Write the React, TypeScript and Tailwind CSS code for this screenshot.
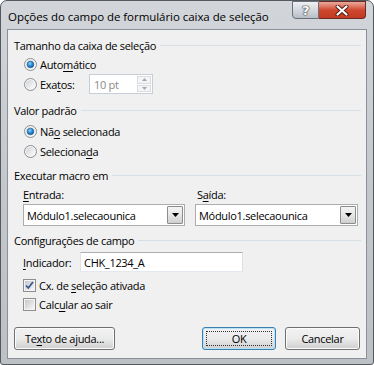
import React from "react";

function Radio({ checked, id }: { checked?: boolean; id: string }) {
  return (
    <svg width="13" height="13" viewBox="0 0 13 13" className="shrink-0">
      <defs>
        <linearGradient id={`rg-${id}`} x1="0" y1="0" x2="1" y2="1">
          <stop offset="0" stopColor="#cfd1d4" />
          <stop offset="1" stopColor="#ffffff" />
        </linearGradient>
        <radialGradient id={`rd-${id}`} cx="0.4" cy="0.35" r="0.7">
          <stop offset="0" stopColor="#8fd3fb" />
          <stop offset="0.5" stopColor="#2a8fd6" />
          <stop offset="1" stopColor="#0f4f8f" />
        </radialGradient>
      </defs>
      <circle cx="6.5" cy="6.5" r="6" fill="#f4f4f4" stroke="#8c8f93" strokeWidth="1" />
      <circle cx="6.5" cy="6.5" r="4.6" fill={`url(#rg-${id})`} />
      {checked && <circle cx="6.5" cy="6.5" r="3.3" fill={`url(#rd-${id})`} stroke="#1c5a93" strokeWidth="0.6" />}
    </svg>
  );
}

function Check({ checked, id }: { checked?: boolean; id: string }) {
  return (
    <svg width="13" height="13" viewBox="0 0 13 13" className="shrink-0">
      <defs>
        <linearGradient id={`cg-${id}`} x1="0" y1="0" x2="1" y2="1">
          <stop offset="0" stopColor="#c5c8cc" />
          <stop offset="1" stopColor="#f7f7f7" />
        </linearGradient>
      </defs>
      <rect x="0.5" y="0.5" width="12" height="12" fill="#f4f4f4" stroke="#8e8f8f" />
      <rect x="2" y="2" width="9" height="9" fill={`url(#cg-${id})`} />
      {checked && (
        <path d="M3 6.5 L5.3 9 L10 3" fill="none" stroke="#3a5a8f" strokeWidth="1.8" strokeLinejoin="round" />
      )}
    </svg>
  );
}

function U({ children }: { children: React.ReactNode }) {
  return <span className="underline underline-offset-[2px] decoration-[1px]">{children}</span>;
}

function Group({ title }: { title: string }) {
  return (
    <div className="flex items-center h-[20px] pl-[6px] pr-[5px]">
      <span className="text-black whitespace-nowrap">{title}</span>
      <div className="ml-[4px] flex-1 h-px bg-[#d5dfe5] mt-[1px]" />
    </div>
  );
}

function Combo({ value }: { value: string }) {
  return (
    <div className="h-[22px] border border-[#abadb3] bg-white flex items-center pl-[3px] pr-[1px]">
      <span className="flex-1 whitespace-nowrap">{value}</span>
      <div className="w-[16px] h-[18px] border border-[#8d8d8d] bg-gradient-to-b from-[#f4f4f4] via-[#e6e6e6] to-[#cfcfcf] flex items-center justify-center rounded-[1px]">
        <svg width="7" height="4" viewBox="0 0 7 4">
          <path d="M0 0 L7 0 L3.5 4 Z" fill="#000" />
        </svg>
      </div>
    </div>
  );
}

function Button({ children, def, w }: { children: React.ReactNode; def?: boolean; w: string }) {
  return (
    <div
      className={`${w} h-[23px] rounded-[3px] border ${
        def ? "border-[#3c7fb1] shadow-[inset_0_0_0_1px_#b8e2f8]" : "border-[#707070] shadow-[inset_0_0_0_1px_#fcfcfc]"
      } bg-gradient-to-b from-[#f2f2f2] via-[#ebebeb] to-[#cfcfcf] flex items-center justify-center relative`}
    >
      {def && <div className="absolute inset-[3px] border border-dotted border-[#333]" />}
      <span className="relative">{children}</span>
    </div>
  );
}

export default function App() {
  return (
    <div className="w-[374px] h-[365px] overflow-hidden font-['Open_Sans','Noto_Sans',sans-serif] text-[11px] tracking-[-0.3px] leading-none text-black">
      <div className="w-[374px] h-[365px] rounded-t-[7px] rounded-b-[3px] border border-[#54595e] bg-gradient-to-b from-[#d2d5d9] via-[#c4c8cc] to-[#bdc1c6] flex flex-col">
        {/* title bar */}
        <div className="h-[28px] flex items-start shrink-0">
          <div className="pl-[7px] pt-[10px] text-[11.5px] tracking-[-0.05px] whitespace-nowrap text-black">
            Opções do campo de formulário caixa de seleção
          </div>
          <div className="ml-auto mr-[7px] flex h-[18px]">
            <div className="w-[27px] h-[18px] rounded-bl-[4px] border border-[#6a7079] bg-gradient-to-b from-[#eef1f4] via-[#d3d8de] to-[#b7bec6] flex items-center justify-center">
              <span className="text-[13px] font-bold text-white [text-shadow:0_0_1px_#333,0_0_1px_#333,0_0_2px_#555] font-['DejaVu_Sans',sans-serif]">?</span>
            </div>
            <div className="w-[47px] h-[18px] rounded-br-[4px] border border-l-0 border-[#6b2a22] bg-gradient-to-b from-[#e9a99c] via-[#d0472f] to-[#c23a20] flex items-center justify-center">
              <svg width="14" height="11" viewBox="0 0 14 11">
                <path d="M2.5 1.5 L11.5 9.5 M11.5 1.5 L2.5 9.5" stroke="#4a1a14" strokeWidth="4" strokeLinecap="round" />
                <path d="M2.5 1.5 L11.5 9.5 M11.5 1.5 L2.5 9.5" stroke="#ffffff" strokeWidth="2.2" strokeLinecap="round" />
              </svg>
            </div>
          </div>
        </div>
        {/* client */}
        <div className="mx-[6px] mb-[5px] h-[330px] border border-[#8a9199] bg-[#f0f0f0] flex flex-col">
          <div className="h-[5px]" />
          <Group title="Tamanho da caixa de seleção" />
          <div className="h-[18px] flex items-center pl-[16px] gap-[3px]">
            <Radio checked id="a" />
            <span>
              Auto<U>m</U>ático
            </span>
          </div>
          <div className="h-[22px] flex items-center pl-[16px]">
            <Radio id="b" />
            <span className="ml-[3px] w-[49px]">
              Exa<U>t</U>os:
            </span>
            <div className="w-[64px] h-[20px] border border-[#c6cfd9] bg-white flex">
              <span className="flex-1 flex items-center pl-[4px] text-[#8a8a8a]">10 pt</span>
              <div className="w-[16px] flex flex-col p-[1px] gap-px">
                <div className="flex-1 border border-[#d8dbe0] bg-[#f4f5f7] flex items-center justify-center">
                  <svg width="5" height="3" viewBox="0 0 5 3"><path d="M0 3 L5 3 L2.5 0 Z" fill="#a7a7a7" /></svg>
                </div>
                <div className="flex-1 border border-[#d8dbe0] bg-[#f4f5f7] flex items-center justify-center">
                  <svg width="5" height="3" viewBox="0 0 5 3"><path d="M0 0 L5 0 L2.5 3 Z" fill="#a7a7a7" /></svg>
                </div>
              </div>
            </div>
          </div>
          <div className="h-[5px]" />
          <Group title="Valor padrão" />
          <div className="h-[22px] flex items-center pl-[16px] gap-[3px]">
            <Radio checked id="c" />
            <span>
              Nã<U>o</U> selecionada
            </span>
          </div>
          <div className="h-[18px] flex items-center pl-[16px] gap-[3px]">
            <Radio id="d" />
            <span>
              Seleciona<U>d</U>a
            </span>
          </div>
          <div className="h-[5px]" />
          <Group title="Executar macro em" />
          <div className="grid grid-cols-[162px_163px] gap-x-[10px] pl-[15px]">
            <div className="h-[19px] flex items-center">
              <span>
                <U>E</U>ntrada:
              </span>
            </div>
            <div className="h-[19px] flex items-center pl-[2px]">
              <span>
                S<U>a</U>ída:
              </span>
            </div>
            <Combo value="Módulo1.selecaounica" />
            <Combo value="Módulo1.selecaounica" />
          </div>
          <div className="h-[4px]" />
          <Group title="Configurações de campo" />
          <div className="h-[1px]" />
          <div className="h-[22px] flex items-center pl-[15px]">
            <span className="w-[57px]">
              <U>I</U>ndicador:
            </span>
            <div className="w-[163px] h-[20px] border border-[#abadb3] border-l-[#e2e3ea] border-r-[#dbdfe6] border-b-[#e3e9ef] bg-white flex items-center pl-[3px]">
              CHK_1234_A
            </div>
          </div>
          <div className="h-[2px]" />
          <div className="h-[20px] flex items-center pl-[15px] gap-[3px]">
            <Check checked id="e" />
            <span>
              Cx. de <U>s</U>eleção ativada
            </span>
          </div>
          <div className="h-[18px] flex items-center pl-[15px] gap-[3px]">
            <Check id="f" />
            <span>
              Calc<U>u</U>lar ao sair
            </span>
          </div>
          <div className="h-[14px]" />
          <div className="flex items-center pl-[6px] pr-[6px]">
            <Button w="w-[101px]">
              Te<U>x</U>to de ajuda...
            </Button>
            <div className="ml-auto flex gap-[9px]">
              <Button def w="w-[74px]">
                OK
              </Button>
              <Button w="w-[75px]">Cancelar</Button>
            </div>
          </div>
        </div>
      </div>
    </div>
  );
}
